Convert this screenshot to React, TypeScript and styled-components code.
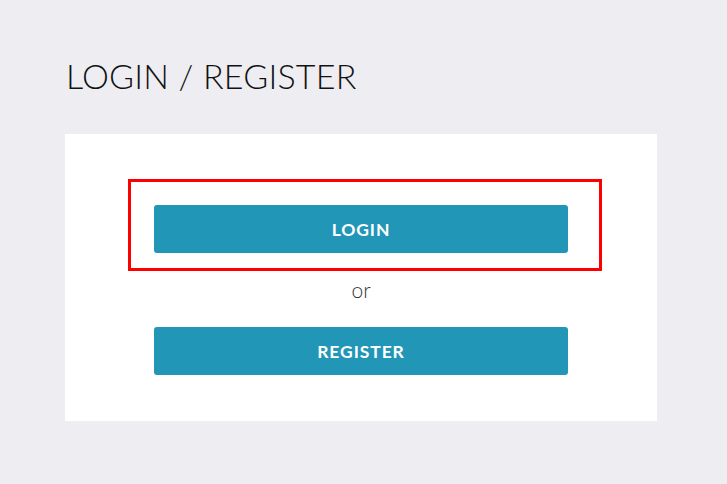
import React from "react";
import styled, { createGlobalStyle } from "styled-components";

const Global = createGlobalStyle`
  html, body { margin: 0; padding: 0; background: #ededf2; }
  body { font-family: Lato, "Open Sans", sans-serif; }
`;

const Page = styled.div`
  padding: 55px 70px 0 65px;
  width: 592px;
`;

const Title = styled.h1`
  margin: 0 0 37px 1px;
  font-family: Lato, sans-serif;
  font-weight: 300;
  font-size: 34px;
  line-height: 42px;
  letter-spacing: 0.2px;
  color: #111;
`;

const Card = styled.div`
  background: #fff;
  padding: 45px 0 46px;
  display: flex;
  flex-direction: column;
  align-items: center;
`;

const Highlight = styled.div`
  box-sizing: border-box;
  width: 474px;
  border: 3px solid #f00;
  padding: 23px 0 15px 23px;
  display: flex;
  justify-content: flex-start;
  margin-left: 8px;
`;

const Button = styled.button`
  width: 414px;
  height: 48px;
  border: none;
  border-radius: 3px;
  background: #2196b6;
  color: #fff;
  font-family: Lato, sans-serif;
  font-weight: 700;
  font-size: 17.5px;
  letter-spacing: 0.9px;
  cursor: pointer;
`;

const Or = styled.div`
  margin: 7px 0 26px;
  font-family: Lato, sans-serif;
  font-weight: 300;
  font-size: 21px;
  line-height: 23px;
  color: #333;
`;

export default function App() {
  return (
    <>
      <Global />
      <Page>
        <Title>LOGIN / REGISTER</Title>
        <Card>
          <Highlight>
            <Button>LOGIN</Button>
          </Highlight>
          <Or>or</Or>
          <Button>REGISTER</Button>
        </Card>
      </Page>
    </>
  );
}
